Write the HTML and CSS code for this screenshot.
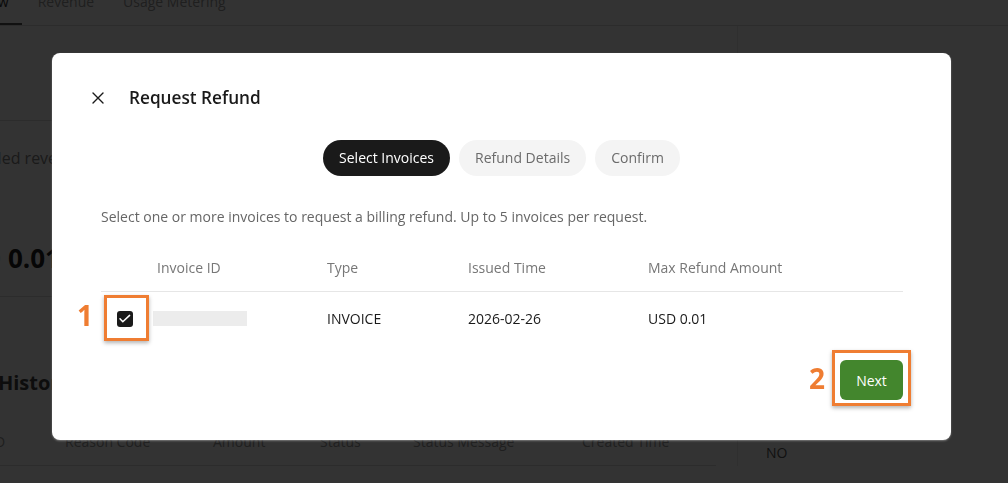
FILE: index.html
```html
<!DOCTYPE html>
<html lang="en">
<head>
<meta charset="utf-8">
<title>Request Refund</title>
<link rel="stylesheet" href="styles.css">
</head>
<body>
<div class="page">
  <nav class="tabs">
    <div class="tab active">Overview</div>
    <div class="tab">Revenue</div>
    <div class="tab">Usage Metering</div>
  </nav>
  <div class="main">
    <div class="left">
      <section class="sec sec-top"></section>
      <section class="sec sec-metric">
        <div class="metric-label">Refunded revenue</div>
        <div class="metric-value">USD 0.01</div>
      </section>
      <section class="sec-history">
        <h2 class="history-title">Refund History</h2>
        <div class="bg-table">
          <div>ID</div><div>Reason Code</div><div>Amount</div><div>Status</div><div>Status Message</div><div>Created Time</div>
        </div>
      </section>
    </div>
    <aside class="right">
      <div class="right-value">NO</div>
    </aside>
  </div>
</div>

<div class="overlay"></div>

<div class="modal" role="dialog">
  <div class="modal-header">
    <svg class="close-icon" width="12" height="12" viewBox="0 0 12 12"><path d="M1 1L11 11M11 1L1 11" stroke="#1a1a1a" stroke-width="1.4" stroke-linecap="round"/></svg>
    <h1 class="modal-title">Request Refund</h1>
  </div>
  <div class="steps">
    <div class="step current">Select Invoices</div>
    <div class="step">Refund Details</div>
    <div class="step">Confirm</div>
  </div>
  <div class="modal-body">
    <p class="desc">Select one or more invoices to request a billing refund. Up to 5 invoices per request.</p>
    <div class="inv-table">
      <div class="inv-head">
        <div></div>
        <div class="h-id">Invoice ID</div>
        <div>Type</div>
        <div>Issued Time</div>
        <div>Max Refund Amount</div>
      </div>
      <div class="inv-row">
        <div class="cell-check">
          <span class="checkbox">
            <svg width="16" height="16" viewBox="0 0 16 16"><path d="M3 7.8L5.8 10.8L12.6 4.4" fill="none" stroke="#fff" stroke-width="1.5" stroke-linecap="round" stroke-linejoin="round"/></svg>
            <span class="mark mark-1"><span class="mark-num">1</span></span>
          </span>
        </div>
        <div><span class="redacted"></span></div>
        <div>INVOICE</div>
        <div>2026-02-26</div>
        <div>USD 0.01</div>
      </div>
    </div>
  </div>
  <div class="modal-footer">
    <button class="btn-next">Next<span class="mark mark-2"><span class="mark-num">2</span></span></button>
  </div>
</div>
</body>
</html>
```
FILE: styles.css
```css
html, body {
  margin: 0;
  padding: 0;
  overflow: hidden;
  background: #fff;
  font-family: "Open Sans", "Liberation Sans", sans-serif;
}

.page {
  margin: -20px 0 0 -65px;
  width: 1073px;
}

.tabs {
  display: flex;
  gap: 3px;
  height: 45px;
  border-bottom: 1px solid #d9d9d9;
}
.tab {
  box-sizing: border-box;
  height: 45px;
  padding: 0 13px;
  line-height: 43px;
  font-size: 14px;
  color: #9a9a9a;
  border-bottom: 2px solid transparent;
}
.tab.active {
  color: #333;
  border-bottom-color: #555;
}

.main {
  display: grid;
  grid-template-columns: 802px 1fr;
}
.left {
  padding: 0 21px 0 13px;
}
.sec {
  border-bottom: 1px solid #d9d9d9;
}
.sec-top { height: 94px; }
.sec-metric { padding: 26px 0 21px; }
.metric-label {
  font-size: 16px;
  line-height: 22px;
  color: #828282;
}
.metric-value {
  margin-top: 72px;
  font-size: 26px;
  line-height: 34px;
  font-weight: 700;
  color: #222;
}
.sec-history { padding-top: 72px; }
.history-title {
  margin: 0 0 0 -27px;
  font-size: 20px;
  line-height: 28px;
  font-weight: 700;
  color: #444;
}
.bg-table {
  margin-top: 35px;
  display: grid;
  grid-template-columns: 74px 148px 107px 93px 169px 1fr;
  padding: 0 0 13px 43px;
  border-bottom: 1px solid #d9d9d9;
  font-size: 14px;
  line-height: 20px;
  color: #9a9a9a;
}
.right {
  border-left: 1px solid #e8e8e8;
  padding: 417px 0 0 28px;
}
.right-value {
  font-size: 14px;
  line-height: 20px;
  color: #555;
}

.overlay {
  position: fixed;
  inset: 0;
  background: rgba(0, 0, 0, 0.8);
}

.modal {
  position: absolute;
  left: 52px;
  top: 53px;
  width: 899px;
  height: 387px;
  box-sizing: border-box;
  padding: 33px 48px 40px 40px;
  background: #fff;
  border-radius: 8px;
  box-shadow: 0 1px 2px rgba(255, 255, 255, 0.35);
  display: flex;
  flex-direction: column;
}
.modal-header {
  display: flex;
  align-items: center;
  gap: 25px;
  height: 24px;
}
.close-icon { display: block; }
.modal-title {
  margin: 0;
  font-size: 17.2px;
  line-height: 26px;
  font-weight: 600;
  color: #1a1a1a;
}
.steps {
  margin-top: 30px;
  padding-left: 8px;
  display: flex;
  justify-content: center;
  gap: 9px;
}
.step {
  height: 36px;
  line-height: 36px;
  padding: 0 16px;
  border-radius: 18px;
  background: #f4f4f4;
  color: #6b6b6b;
  font-size: 14px;
}
.step.current {
  background: #1a1a1a;
  color: #fff;
}
.modal-body { padding-left: 9px; }
.desc {
  margin: 31px 0 0;
  font-size: 14px;
  line-height: 20px;
  color: #666;
}
.inv-table { margin-top: 16px; }
.inv-head, .inv-row {
  display: grid;
  grid-template-columns: 52px 174px 141px 180px 1fr;
  align-items: center;
  font-size: 14px;
}
.inv-head {
  height: 48px;
  border-bottom: 1px solid #e6e6e6;
  color: #777;
}
.h-id { padding-left: 4px; }
.inv-row {
  height: 53px;
  color: #1a1a1a;
}
.cell-check { padding-left: 16px; }
.checkbox {
  position: relative;
  display: block;
  width: 16px;
  height: 16px;
  border-radius: 3px;
  background: #1a1a1a;
}
.checkbox svg { display: block; }
.redacted {
  display: block;
  width: 94px;
  height: 15px;
  background: #ececec;
}

.modal-footer {
  margin-top: auto;
  display: flex;
  justify-content: flex-end;
}
.btn-next {
  position: relative;
  width: 63px;
  height: 40px;
  border: 0;
  border-radius: 6px;
  background: #43862d;
  color: #fff;
  font-family: "Open Sans", "Liberation Sans", sans-serif;
  font-size: 14px;
  padding: 0;
}

.mark {
  position: absolute;
  box-sizing: border-box;
  border: 3px solid #ef7d32;
  box-shadow: 0 2px 4px rgba(0, 0, 0, 0.3);
}
.mark-1 {
  left: -13px;
  top: -16px;
  width: 45px;
  height: 46px;
}
.mark-2 {
  left: -8px;
  top: -10px;
  width: 79px;
  height: 56px;
}
.mark-num {
  position: absolute;
  top: 50%;
  transform: translateY(-50%);
  font-family: "Open Sans", "Liberation Sans", sans-serif;
  font-size: 28px;
  line-height: 30px;
  font-weight: 700;
  color: #ef7d32;
}
.mark-1 .mark-num { right: calc(100% + 14px); margin-top: -3px; }
.mark-2 .mark-num { right: calc(100% + 10px); }
```
